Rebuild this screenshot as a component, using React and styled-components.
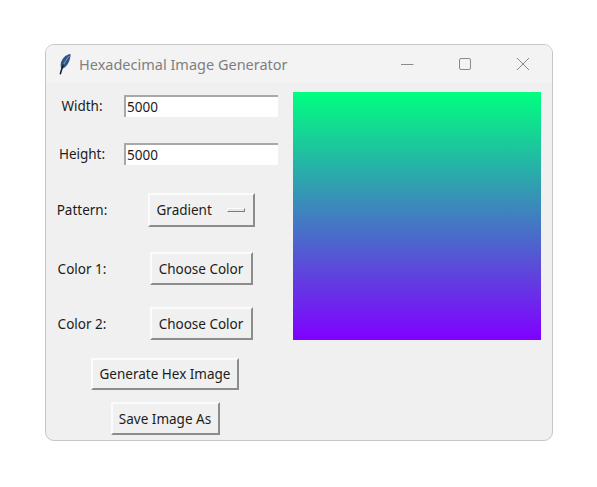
import React from 'react'
import styled, { createGlobalStyle } from 'styled-components'

const GlobalStyle = createGlobalStyle`
  html, body {
    margin: 0;
    background: #fff;
  }
  body {
    font-family: "Noto Sans", "Open Sans", sans-serif;
  }
`

const Page = styled.div`
  width: 597px;
  height: 487px;
  padding: 44px 0 0 45px;
  box-sizing: border-box;
  overflow: hidden;
`

const Window = styled.div`
  width: 508px;
  height: 397px;
  box-sizing: border-box;
  border: 1px solid #c6c6c6;
  border-radius: 9px;
  background: #f0f0f0;
  overflow: hidden;
`

const TitleBar = styled.div`
  height: 38px;
  background: #f3f3f3;
  display: flex;
  align-items: center;
  padding-left: 12px;
`

const Title = styled.span`
  margin-left: 7px;
  font-size: 14.5px;
  color: #7f7f7f;
  white-space: nowrap;
  flex: 1;
`

const WinControls = styled.div`
  display: flex;
  align-items: center;
`

const WinControl = styled.div`
  width: 58px;
  height: 38px;
  display: flex;
  align-items: center;
  justify-content: center;
`

const Body = styled.div`
  display: flex;
  align-items: flex-start;
`

const Form = styled.div`
  width: 238px;
  display: grid;
  grid-template-columns: 72px 166px;
  grid-template-rows: 46px 50px 62px 55px 55px 45px 45px;
  align-items: center;
  justify-items: center;
`

const Label = styled.span`
  font-size: 13.5px;
  color: #1c1c1c;
`

const Input = styled.input`
  width: 154px;
  height: 22px;
  box-sizing: border-box;
  border: none;
  border-top: 2px solid #a8a8a8;
  border-left: 2px solid #a8a8a8;
  background: #fff;
  padding: 0 0 0 1px;
  margin: 0;
  font: inherit;
  font-size: 13.5px;
  color: #1c1c1c;
  outline: none;
`

const Button = styled.button`
  box-sizing: border-box;
  width: ${p => p.$w}px;
  height: ${p => p.$h}px;
  padding: 0;
  margin: 0;
  border-style: solid;
  border-width: 2px;
  border-color: #fbfbfb #8c8c8c #8c8c8c #fbfbfb;
  background: #f0f0f0;
  font: inherit;
  font-size: 13.5px;
  color: #1c1c1c;
  white-space: nowrap;
  display: flex;
  align-items: center;
  justify-content: center;
  grid-column: ${p => (p.$span ? '1 / span 2' : 'auto')};
`

const MenuButton = styled(Button)`
  justify-content: space-between;
  padding: 0 8px 0 7px;
`

const MenuMark = styled.span`
  width: 18px;
  height: 4px;
  box-sizing: border-box;
  border-style: solid;
  border-width: 1px;
  border-color: #fbfbfb #7d7d7d #7d7d7d #fbfbfb;
  background: #e6e6e6;
`

const Preview = styled.div`
  width: 248px;
  height: 248px;
  margin: 9px 0 0 9px;
  background: linear-gradient(to bottom, #00ff80, #8000ff);
`

const Feather = () => (
  <svg width="14" height="22" viewBox="0 0 14 22">
    <path d="M12.6 1 C8 1.6 4.2 5 3 9.6 C2.4 12 2.6 14.4 3.6 16.2 L6.6 14.6 C9.8 12.2 12.6 6.4 12.6 1 Z" fill="#2c5488" />
    <path d="M11.4 3 C8.6 6 6 10.4 4.2 14.4" stroke="#9db7d6" strokeWidth="0.8" fill="none" />
    <path d="M5.2 12 C4.2 14.6 3.2 17.4 2.4 20.6" stroke="#14202e" strokeWidth="1.6" fill="none" strokeLinecap="round" />
  </svg>
)

const MinimizeIcon = () => (
  <svg width="14" height="14" viewBox="0 0 14 14">
    <path d="M1 7.5 H13.5" stroke="#8a8a8a" strokeWidth="1" fill="none" />
  </svg>
)

const MaximizeIcon = () => (
  <svg width="14" height="14" viewBox="0 0 14 14">
    <rect x="1.5" y="1.5" width="11" height="11" rx="1.5" stroke="#8a8a8a" strokeWidth="1" fill="none" />
  </svg>
)

const CloseIcon = () => (
  <svg width="14" height="14" viewBox="0 0 14 14">
    <path d="M1 1 L13 13 M13 1 L1 13" stroke="#8a8a8a" strokeWidth="1" fill="none" />
  </svg>
)

export default function App() {
  return (
    <Page>
      <GlobalStyle />
      <Window>
        <TitleBar>
          <Feather />
          <Title>Hexadecimal Image Generator</Title>
          <WinControls>
            <WinControl><MinimizeIcon /></WinControl>
            <WinControl><MaximizeIcon /></WinControl>
            <WinControl><CloseIcon /></WinControl>
          </WinControls>
        </TitleBar>
        <Body>
          <Form>
            <Label>Width:</Label>
            <Input defaultValue="5000" />
            <Label>Height:</Label>
            <Input defaultValue="5000" />
            <Label>Pattern:</Label>
            <MenuButton $w={107} $h={34}>
              Gradient
              <MenuMark />
            </MenuButton>
            <Label>Color 1:</Label>
            <Button $w={103} $h={33}>Choose Color</Button>
            <Label>Color 2:</Label>
            <Button $w={103} $h={33}>Choose Color</Button>
            <Button $span $w={148} $h={32}>Generate Hex Image</Button>
            <Button $span $w={109} $h={33}>Save Image As</Button>
          </Form>
          <Preview />
        </Body>
      </Window>
    </Page>
  )
}
